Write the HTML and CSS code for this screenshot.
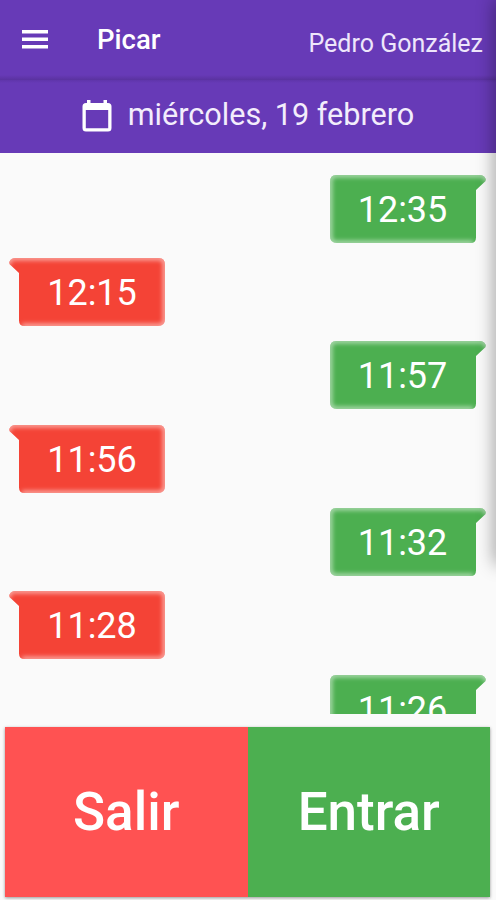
FILE: index.html
```html
<!DOCTYPE html>
<html lang="es">
<head>
<meta charset="utf-8">
<title>Picar</title>
<link rel="stylesheet" href="styles.css">
</head>
<body>
<svg class="defs" aria-hidden="true">
  <defs>
    <filter id="soft" x="-10%" y="-20%" width="120%" height="140%"><feGaussianBlur stdDeviation="2.2"/></filter>
    <clipPath id="bubble-clip"><path d="M6 0H150Q154 0 155.500 3.500Q156.500 5.500 154 7.500L146 15V62.500Q146 68 140.500 68H7Q0 68 0 61V7Q0 0 6 0Z"/></clipPath>
    <symbol id="bubble" viewBox="0 0 156 68">
      <g clip-path="url(#bubble-clip)">
        <rect width="156" height="68" fill="currentColor"/>
        <path d="M143 68H6Q0 68 0 61V6Q0 0 6 0H156V7" fill="none" stroke="#fff" stroke-opacity=".52" stroke-width="5" filter="url(#soft)"/>
      </g>
    </symbol>
  </defs>
</svg>
<div class="app">
  <header class="bar">
    <svg class="menu" viewBox="0 0 26 19"><path d="M0 1.800H26M0 9.300H26M0 16.800H26" stroke="#fff" stroke-width="3.400"/></svg>
    <h1 class="title">Picar</h1>
    <span class="user">Pedro González</span>
  </header>
  <div class="date">
    <svg class="calendar" viewBox="0 0 30 33"><path fill="#fff" fill-rule="evenodd" d="M5 1H8.500V4H21.500V1H25V4H26Q29.500 4 29.500 7.500V29Q29.500 32.500 26 32.500H4Q.5 32.500 .5 29V7.500Q.5 4 4 4H5ZM3.800 11V29.200H26.200V11Z"/></svg>
    <span class="day">miércoles, 19 febrero</span>
  </div>
  <main class="list">
    <div class="entry in"><svg class="shape"><use href="#bubble"/></svg><span class="time">12:35</span></div>
    <div class="entry out"><svg class="shape"><use href="#bubble"/></svg><span class="time">12:15</span></div>
    <div class="entry in"><svg class="shape"><use href="#bubble"/></svg><span class="time">11:57</span></div>
    <div class="entry out"><svg class="shape"><use href="#bubble"/></svg><span class="time">11:56</span></div>
    <div class="entry in"><svg class="shape"><use href="#bubble"/></svg><span class="time">11:32</span></div>
    <div class="entry out"><svg class="shape"><use href="#bubble"/></svg><span class="time">11:28</span></div>
    <div class="entry in"><svg class="shape"><use href="#bubble"/></svg><span class="time">11:26</span></div>
  </main>
  <footer class="actions">
    <button class="action leave">Salir</button>
    <button class="action enter">Entrar</button>
  </footer>
  <div class="edge"></div>
</div>
</body>
</html>
```
FILE: styles.css
```css
* { box-sizing: border-box; }
body { margin: 0; font-family: Roboto, "Liberation Sans", sans-serif; color: #fff; background: #fafafa; }
.defs { position: absolute; width: 0; height: 0; }
.app { position: relative; display: flex; flex-direction: column; height: 900px; overflow: hidden; }
.bar { display: flex; align-items: center; height: 80px; padding: 0 13px 2px 22px; background: linear-gradient(#673ab7 75px, #5a329f 80px); }
.menu { width: 26px; height: 19px; }
.title { margin: 2px 0 0 49px; font-size: 27.500px; font-weight: 500; line-height: 30px; }
.user { margin: 9px 0 0 auto; font-size: 25px; line-height: 30px; color: #eee6fb; }
.date { display: flex; align-items: center; justify-content: center; gap: 16px; height: 73px; padding: 0 0 3px 0; background: linear-gradient(#5f35aa, #673ab7 3px); }
.calendar { width: 30px; height: 33px; }
.day { font-size: 30.600px; line-height: 40px; color: #f3edfc; }
.list { display: flex; flex-direction: column; gap: 15.400px; height: 561px; padding: 21.500px 10px 0 9px; overflow: hidden; }
.entry { position: relative; display: flex; flex: none; width: 156px; height: 68px; padding-top: 2px; align-items: center; justify-content: center; }
.in { align-self: flex-end; padding-right: 11px; color: #4caf50; }
.out { padding-left: 10px; color: #f44336; }
.shape { position: absolute; inset: 0; width: 156px; height: 68px; }
.out .shape { transform: scaleX(-1); }
.time { position: relative; font-size: 36px; line-height: 42px; color: #fff; }
.actions { display: flex; height: 170px; margin: 13px 6px 0 5px; box-shadow: 0 1px 3px rgba(0, 0, 0, .4); }
.action { flex: 1; padding: 0 0 1px; border: 0; font: 500 53px Roboto, "Liberation Sans", sans-serif; color: #fff; }
.leave { background: #ff5252; }
.enter { background: #4caf50; }
.edge { position: absolute; top: 0; right: -12px; width: 12px; height: 563px; box-shadow: 0 0 18px 1px rgba(0, 0, 0, .42); }
```
